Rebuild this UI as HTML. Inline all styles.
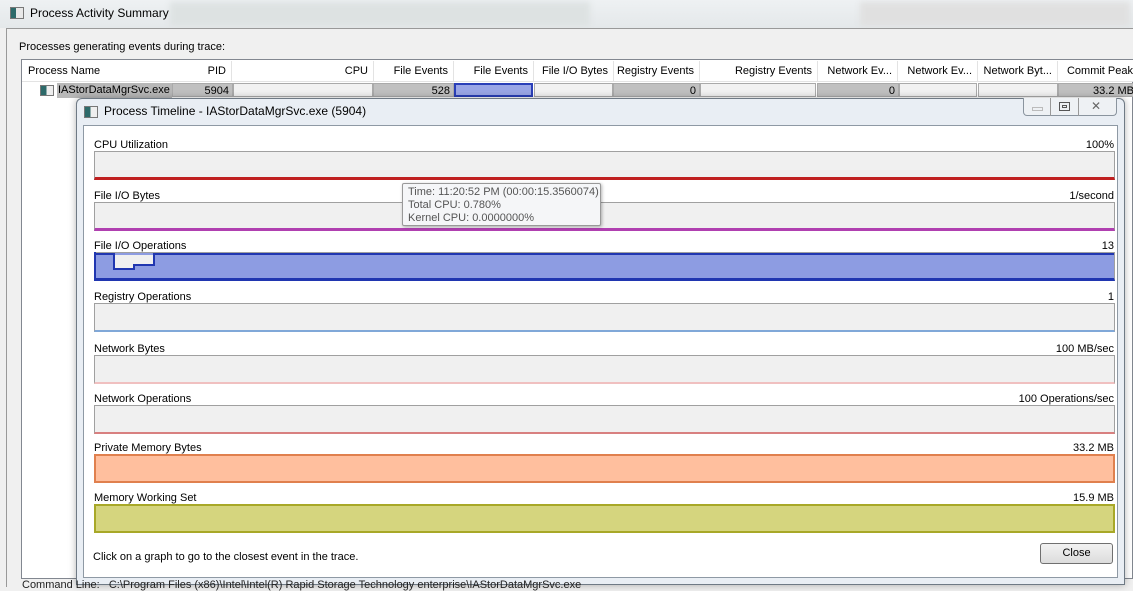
<!DOCTYPE html>
<html><head><meta charset="utf-8"><style>
*{box-sizing:border-box;margin:0;padding:0}
body{width:1133px;height:587px;overflow:hidden;background:#f0f0f0;font-family:"Liberation Sans",sans-serif;font-size:11px;color:#000;position:relative}
.a{position:absolute;white-space:nowrap}
.hdr{position:absolute;top:61px;height:20px;line-height:20px;text-align:right;padding-right:5px;border-right:1px solid #e3e3e3}
.cell{position:absolute;top:83px;height:14px;line-height:14px;text-align:right;padding-right:3px;border:1px solid #aaa;background:#f2f2f2}
.lbl{position:absolute;left:94px;width:1020px;font-size:11px}
.lbl span{float:right}
.bar{position:absolute;left:94px;width:1021px;height:29px;background:#f0f0f0;border:1px solid #a0a0a0}
</style></head><body>
<!-- outer title bar -->
<div class="a" style="left:0;top:0;width:1133px;height:28px;background:linear-gradient(#eef1f3,#e4e8ea);"></div>
<div class="a" style="left:170px;top:2px;width:420px;height:24px;background:#dde2e2;filter:blur(3px)"></div>
<div class="a" style="left:860px;top:2px;width:270px;height:24px;background:#e0e0e0;filter:blur(3px)"></div>
<div class="a" style="left:10px;top:7px;width:14px;height:12px;border:1px solid #777;background:linear-gradient(90deg,#2d6a6a 40%,#e8e8e8 40%)"></div>
<div class="a" style="left:30px;top:6px;font-size:12px">Process Activity Summary</div>
<div class="a" style="left:6px;top:28px;width:1127px;height:559px;background:#f0f0f0;border-left:1px solid #999;border-top:1px solid #999"></div>
<div class="a" style="left:19px;top:41px">Processes generating events during trace:</div>
<div class="a" style="left:21px;top:59px;width:1112px;height:520px;background:#fff;border:1px solid #828790"></div>
<div class="a" style="left:22px;top:60px;width:1111px;height:22px;background:#fff;border-bottom:1px solid #e3e3e3"></div>
<div class="a" style="left:28px;top:65px">Process Name</div>
<div class="hdr" style="left:172px;width:60px">PID</div>
<div class="hdr" style="left:232px;width:142px">CPU</div>
<div class="hdr" style="left:374px;width:80px">File Events</div>
<div class="hdr" style="left:454px;width:80px">File Events</div>
<div class="hdr" style="left:534px;width:80px">File I/O Bytes</div>
<div class="hdr" style="left:614px;width:86px">Registry Events</div>
<div class="hdr" style="left:700px;width:118px">Registry Events</div>
<div class="hdr" style="left:818px;width:80px">Network Ev...</div>
<div class="hdr" style="left:898px;width:80px">Network Ev...</div>
<div class="hdr" style="left:978px;width:80px">Network Byt...</div>
<div class="hdr" style="left:1058px;width:80px;border:none">Commit Peak</div>
<div class="a" style="left:40px;top:85px;width:14px;height:11px;border:1px solid #777;background:linear-gradient(90deg,#2d6a6a 45%,#eee 45%)"></div>
<div class="a" style="left:57px;top:83px;width:115px;height:15px;background:#b8b8b8;line-height:15px;padding-left:1px">IAStorDataMgrSvc.exe</div>
<div class="cell" style="left:172px;width:61px;background:#c0c0c0">5904</div>
<div class="cell" style="left:233px;width:140px"></div>
<div class="cell" style="left:373px;width:81px;background:#c0c0c0">528</div>
<div class="cell" style="left:454px;width:79px;background:#9aa6e6;border:2px solid #2a3fb8"></div>
<div class="cell" style="left:534px;width:79px"></div>
<div class="cell" style="left:613px;width:87px;background:#c0c0c0">0</div>
<div class="cell" style="left:700px;width:116px"></div>
<div class="cell" style="left:817px;width:82px;background:#c0c0c0">0</div>
<div class="cell" style="left:899px;width:78px"></div>
<div class="cell" style="left:978px;width:80px"></div>
<div class="cell" style="left:1058px;width:80px;background:#c0c0c0">33.2 MB</div>
<!-- inner dialog -->
<div class="a" style="left:76px;top:98px;width:1049px;height:487px;background:#e9eef4;border:1px solid #6f7a85;border-radius:6px 6px 0 0;box-shadow:0 0 8px rgba(0,0,0,.3)"></div>
<div class="a" style="left:84px;top:106px;width:14px;height:12px;border:1px solid #777;background:linear-gradient(90deg,#2d6a6a 45%,#eee 45%)"></div>
<div class="a" style="left:104px;top:104px;font-size:12px">Process Timeline - IAStorDataMgrSvc.exe (5904)</div>
<div class="a" style="left:1023px;top:98px;width:94px;height:18px;border:1px solid #8a949e;border-top:none;border-radius:0 0 4px 4px;background:#eef1f4"></div>
<div class="a" style="left:1050px;top:98px;width:1px;height:18px;background:#999"></div>
<div class="a" style="left:1078px;top:98px;width:1px;height:18px;background:#999"></div>
<div class="a" style="left:1032px;top:107px;width:11px;height:4px;border:1px solid #bbb"></div>
<div class="a" style="left:1059px;top:102px;width:11px;height:9px;border:1px solid #555"><div style="margin:2px;height:3px;border:1px solid #555"></div></div>
<div class="a" style="left:1091px;top:99px;font-size:12px;color:#666">&#x2715;</div>
<div class="a" style="left:83px;top:125px;width:1035px;height:453px;background:#fff;border:1px solid #8e99a4"></div>

<div class="lbl" style="top:139px">CPU Utilization<span>100%</span></div>
<div class="bar" style="top:151px;border-bottom:3px solid #c02020"></div>
<div class="lbl" style="top:190px">File I/O Bytes<span>1/second</span></div>
<div class="bar" style="top:202px;border-bottom:3px solid #b040b0"></div>
<div class="lbl" style="top:240px">File I/O Operations<span>13</span></div>
<div class="bar" style="top:252px;background:#8d9ce2;border-bottom:3px solid #2036b0"></div>
<svg class="a" style="left:94px;top:252px" width="1021" height="29"><path d="M1 0V29M1 2H20V17H40V13H60V2H1020" fill="none" stroke="#2036b0" stroke-width="2"/><path d="M21 3H59V12H39V16H21Z" fill="#f0f0f0"/></svg>
<div class="lbl" style="top:291px">Registry Operations<span>1</span></div>
<div class="bar" style="top:303px;border-bottom:2px solid #80a8d8"></div>
<div class="lbl" style="top:343px">Network Bytes<span>100 MB/sec</span></div>
<div class="bar" style="top:355px;border-bottom:2px solid #f0c0c0"></div>
<div class="lbl" style="top:393px">Network Operations<span>100 Operations/sec</span></div>
<div class="bar" style="top:405px;border-bottom:2px solid #d88080"></div>
<div class="lbl" style="top:442px">Private Memory Bytes<span>33.2 MB</span></div>
<div class="bar" style="top:454px;background:#ffbf9e;border:2px solid #e0804e"></div>
<div class="lbl" style="top:492px">Memory Working Set<span>15.9 MB</span></div>
<div class="bar" style="top:504px;background:#d5d57e;border:2px solid #a8a828"></div>

<div class="a" style="left:402px;top:183px;width:199px;height:43px;background:#f5f6f8;border:1px solid #999;border-radius:2px;box-shadow:1px 1px 3px rgba(0,0,0,.3);padding:2px 5px;color:#555;line-height:13px;font-size:11px">Time: 11:20:52 PM (00:00:15.3560074)<br>Total CPU: 0.780%<br>Kernel CPU: 0.0000000%</div>

<div class="a" style="left:93px;top:551px">Click on a graph to go to the closest event in the trace.</div>
<div class="a" style="left:1040px;top:543px;width:73px;height:21px;border:1px solid #707070;border-radius:3px;background:linear-gradient(#f2f2f2,#dcdcdc);text-align:center;line-height:19px">Close</div>
<div class="a" style="left:22px;top:579px;color:#222">Command Line:&nbsp;&nbsp;&nbsp;C:\Program Files (x86)\Intel\Intel(R) Rapid Storage Technology enterprise\IAStorDataMgrSvc.exe</div>
</body></html>
